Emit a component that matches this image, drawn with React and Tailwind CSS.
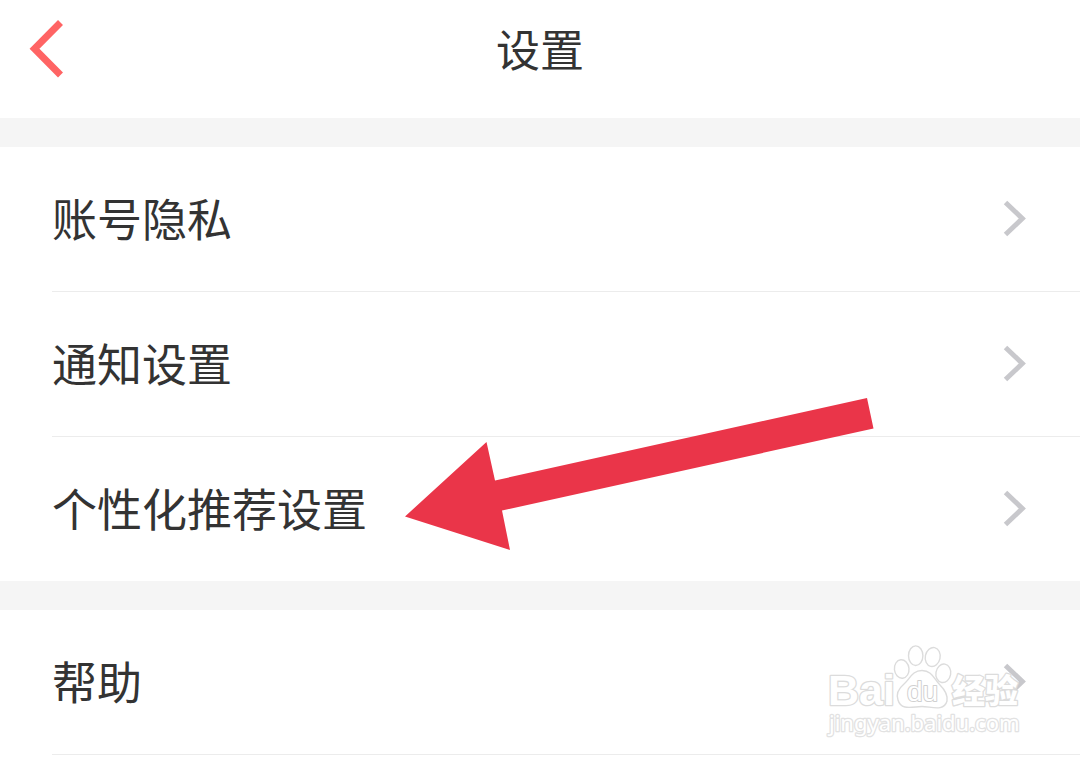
const groups = [
  {
    id: 'account',
    items: [
      { id: 'privacy', label: '账号隐私', divider: true },
      { id: 'notifications', label: '通知设置', divider: true },
      { id: 'recommend', label: '个性化推荐设置' }
    ]
  },
  {
    id: 'support',
    items: [{ id: 'help', label: '帮助', divider: true }]
  }
];

function BackIcon() {
  return (
    <svg width="36" height="58" viewBox="0 0 36 58" fill="none" aria-hidden="true">
      <path d="M32.5 2.5 L6.5 28.8 L32.5 55" stroke="#ff6464" strokeWidth="7" />
    </svg>
  );
}

function ChevronIcon() {
  return (
    <svg width="24" height="38" viewBox="0 0 24 38" fill="none" aria-hidden="true">
      <path d="M2.5 2.5 L19.3 18.5 L2.5 34.5" stroke="#c8c8cc" strokeWidth="5" />
    </svg>
  );
}

function PointerArrow() {
  return (
    <svg
      className="absolute left-[404px] top-[398px] pointer-events-none"
      width="470"
      height="153"
      viewBox="0 0 470 153"
      aria-hidden="true"
    >
      <path d="M1 118.5 L82.5 44 L91 82.5 L463 0 L469.5 30.5 L98 112.5 L106 152 Z" fill="#ea3549" />
    </svg>
  );
}

function Watermark() {
  return (
    <svg
      className="absolute right-[54px] top-[640px] pointer-events-none"
      width="204"
      height="102"
      viewBox="0 0 204 102"
      fill="#ffffff"
      stroke="#dcdcdc"
      strokeWidth="1.4"
      strokeLinejoin="round"
    >
      <g paintOrder="stroke" strokeWidth="2.6">
        <text x="6" y="65" fontSize="43" fontWeight="700" className="font-['Liberation_Sans',sans-serif]">
          Bai
        </text>
        <text x="130" y="63" fontSize="33" fontWeight="900" className="font-['Noto_Sans_CJK_SC',sans-serif]">
          经验
        </text>
        <text x="7" y="91" fontSize="22" stroke="#e2e2e2" className="font-['Noto_Sans',sans-serif]">
          jingyan.baidu.com
        </text>
      </g>
      <ellipse cx="79.7" cy="29" rx="7.3" ry="9.3" transform="rotate(-6 79.7 29)" />
      <ellipse cx="93.7" cy="15.7" rx="7.2" ry="9.8" />
      <ellipse cx="110.7" cy="17" rx="7.4" ry="9.6" transform="rotate(12 110.7 17)" />
      <ellipse cx="121.3" cy="33.3" rx="7.4" ry="9.3" transform="rotate(10 121.3 33.3)" />
      <path d="M100 30.5 C90 30.5 88 39 82 44 C76 49 74 54 76 60 C79 71 91 66.5 100 66.5 C109 66.5 122 72 125 61 C126 55 123 50 118 45 C112 39 110 30.5 100 30.5 Z" />
      <text x="85" y="61" fontSize="28" stroke="#d0d0d0" strokeWidth="2" paintOrder="stroke" className="font-['Liberation_Sans',sans-serif]">
        du
      </text>
    </svg>
  );
}

function SettingsRow({ item }) {
  return (
    <li className={`ml-[52px] border-[#ececec] ${item.divider ? 'border-b' : ''}`}>
      <button type="button" className="flex h-36 w-full items-center justify-between pr-[53px] text-left">
        <span className="pb-0.5">{item.label}</span>
        <ChevronIcon />
      </button>
    </li>
  );
}

export default function App() {
  return (
    <div className="relative min-h-screen overflow-hidden bg-white text-[45px] leading-[56px] text-[#333333] font-['Noto_Sans_CJK_SC',sans-serif]">
      <header className="grid h-[118px] grid-cols-[1fr_auto_1fr] items-start px-7 pt-5">
        <button type="button" aria-label="返回" className="justify-self-start">
          <BackIcon />
        </button>
        <h1 className="text-[44px]">设置</h1>
      </header>

      <main>
        {groups.map((group) => (
          <section key={group.id}>
            <div className="h-[29px] bg-[#f5f5f5]"></div>
            <ul>
              {group.items.map((item) => (
                <SettingsRow key={item.id} item={item} />
              ))}
            </ul>
          </section>
        ))}
      </main>

      <PointerArrow />
      <Watermark />
    </div>
  );
}
